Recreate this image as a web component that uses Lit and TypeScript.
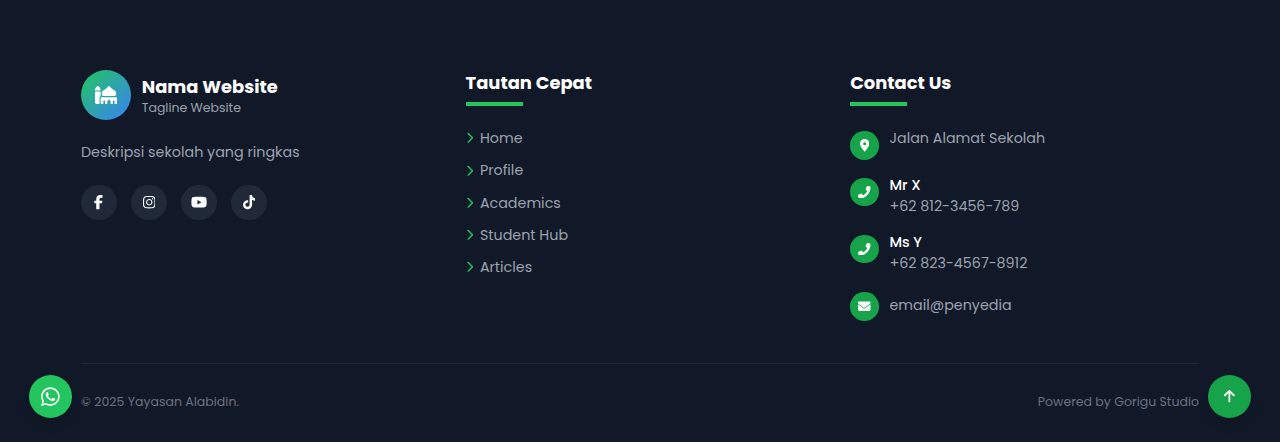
import { LitElement, html, css, svg } from "lit";
import { customElement, property } from "lit/decorators.js";

const ICONS: Record<string, { w: number; d: string }> = {
  mosque: { w: 640, d: "M400 0c5 0 9.8 2.4 12.8 6.4c34.7 46.3 78.1 74.9 133.5 111.5c5.2 3.4 10.5 7 16 10.6c28.9 19.2 45.7 51.7 45.7 86.1c0 28.6-11.3 54.5-29.8 73.4H221.8c-18.4-19-29.8-44.9-29.8-73.4c0-34.4 16.7-66.9 45.7-86.1c5.4-3.6 10.8-7.1 16-10.6C309.1 81.3 352.5 52.7 387.2 6.4c3-4 7.8-6.4 12.8-6.4zM288 512V440c0-13.3-10.7-24-24-24s-24 10.7-24 24v72H192c-17.7 0-32-14.3-32-32V352c0-17.7 14.3-32 32-32H608c17.7 0 32 14.3 32 32V480c0 17.7-14.3 32-32 32H560V440c0-13.3-10.7-24-24-24s-24 10.7-24 24v72H448V454c0-19-8.4-37-23-49.2L400 384l-25 20.8C360.4 417 352 435 352 454v58H288zM70.4 5.2c5.7-4.3 13.5-4.3 19.2 0l16 12C139.8 42.9 160 83.2 160 126v2H0v-2C0 83.2 20.2 42.9 54.4 17.2l16-12zM0 160H160V296.6c-19.1 11.1-32 31.7-32 55.4V480c0 9.6 2.1 18.6 5.8 26.8c-6.6 3.4-14 5.2-21.8 5.2H48c-26.5 0-48-21.5-48-48V176 160z" },
  facebook: { w: 320, d: "M80 299.3V512H196V299.3h86.5l18-97.8H196V166.9c0-51.7 20.3-71.5 72.7-71.5c16.3 0 29.4 .4 37 1.2V7.9C291.4 4 256.4 0 236.2 0C129.3 0 80 50.5 80 159.4v42.1H14v97.8H80z" },
  instagram: { w: 448, d: "M224.1 141c-63.6 0-114.9 51.3-114.9 114.9s51.3 114.9 114.9 114.9S339 319.5 339 255.9 287.7 141 224.1 141zm0 189.6c-41.1 0-74.7-33.5-74.7-74.7s33.5-74.7 74.7-74.7 74.7 33.5 74.7 74.7-33.6 74.7-74.7 74.7zm146.4-194.3c0 14.9-12 26.8-26.8 26.8-14.9 0-26.8-12-26.8-26.8s12-26.8 26.8-26.8 26.8 12 26.8 26.8zm76.1 27.2c-1.7-35.9-9.9-67.7-36.2-93.9-26.2-26.2-58-34.4-93.9-36.2-37-2.1-147.9-2.1-184.9 0-35.8 1.7-67.6 9.9-93.9 36.1s-34.4 58-36.2 93.9c-2.1 37-2.1 147.9 0 184.9 1.7 35.9 9.9 67.7 36.2 93.9s58 34.4 93.9 36.2c37 2.1 147.9 2.1 184.9 0 35.9-1.7 67.7-9.9 93.9-36.2 26.2-26.2 34.4-58 36.2-93.9 2.1-37 2.1-147.8 0-184.8zM398.8 388c-7.8 19.6-22.9 34.7-42.6 42.6-29.5 11.7-99.5 9-132.1 9s-102.7 2.6-132.1-9c-19.6-7.8-34.7-22.9-42.6-42.6-11.7-29.5-9-99.5-9-132.1s-2.6-102.7 9-132.1c7.8-19.6 22.9-34.7 42.6-42.6 29.5-11.7 99.5-9 132.1-9s102.7-2.6 132.1 9c19.6 7.8 34.7 22.9 42.6 42.6 11.7 29.5 9 99.5 9 132.1s2.7 102.7-9 132.1z" },
  youtube: { w: 576, d: "M549.655 124.083c-6.281-23.65-24.787-42.276-48.284-48.597C458.781 64 288 64 288 64S117.22 64 74.629 75.486c-23.497 6.322-42.003 24.947-48.284 48.597-11.412 42.867-11.412 132.305-11.412 132.305s0 89.438 11.412 132.305c6.281 23.65 24.787 41.5 48.284 47.821C117.22 448 288 448 288 448s170.78 0 213.371-11.486c23.497-6.321 42.003-24.171 48.284-47.821 11.412-42.867 11.412-132.305 11.412-132.305s0-89.438-11.412-132.305zm-317.51 213.508V175.185l142.739 81.205-142.739 81.201z" },
  tiktok: { w: 448, d: "M448 209.9a210.1 210.1 0 0 1 -122.8-39.3V349.4A162.6 162.6 0 1 1 185 188.3V278.200a74.6 74.6 0 1 0 52.200 71.200V0l88 0a121.200 121.200 0 0 0 1.900 22.200h0A122.200 122.200 0 0 0 381 102.400a121.400 121.400 0 0 0 67 20.100z" },
  pin: { w: 384, d: "M215.7 499.2C267 435 384 279.400 384 192C384 86 298 0 192 0S0 86 0 192c0 87.400 117 243 168.300 307.200c12.300 15.300 35.100 15.300 47.400 0zM192 128a64 64 0 1 1 0 128 64 64 0 1 1 0-128z" },
  phone: { w: 512, d: "M493.4 24.6l-104-24c-11.300-2.600-22.900 3.300-27.500 13.900l-48 112c-4.200 9.800-1.400 21.300 6.900 28l60.600 49.600c-36 76.700-98.900 140.500-177.200 177.200l-49.600-60.600c-6.800-8.300-18.200-11.100-28-6.900l-112 48C3.900 366.500-2 378.100.600 389.400l24 104C27.100 504.200 36.700 512 48 512c256.100 0 464-207.500 464-464 0-11.200-7.700-20.900-18.600-23.400z" },
  envelope: { w: 512, d: "M48 64C21.500 64 0 85.500 0 112c0 15.100 7.100 29.300 19.200 38.400L236.800 313.600c11.400 8.500 27 8.500 38.400 0L492.800 150.400c12.100-9.100 19.200-23.300 19.200-38.400c0-26.500-21.500-48-48-48H48zM0 176V384c0 35.300 28.700 64 64 64H448c35.300 0 64-28.700 64-64V176L294.400 339.200c-22.800 17.100-54 17.100-76.800 0L0 176z" },
  whatsapp: { w: 448, d: "M380.9 97.100C339 55.100 283.200 32 223.900 32c-122.400 0-222 99.600-222 222 0 39.100 10.200 77.300 29.600 111L0 480l117.700-30.900c32.400 17.700 68.900 27 106.100 27h.1c122.300 0 224.100-99.600 224.100-222 0-59.300-25.200-115-67.100-157zm-157 341.600c-33.200 0-65.700-8.900-94-25.700l-6.700-4-69.800 18.300L72 359.200l-4.400-7c-18.500-29.400-28.200-63.300-28.200-98.200 0-101.700 82.800-184.500 184.600-184.500 49.300 0 95.600 19.200 130.400 54.100 34.800 34.900 56.200 81.200 56.100 130.500 0 101.800-84.900 184.600-186.600 184.600zm101.200-138.200c-5.500-2.800-32.800-16.200-37.900-18-5.100-1.900-8.800-2.800-12.500 2.800-3.700 5.600-14.300 18-17.600 21.800-3.200 3.700-6.500 4.200-12 1.400-32.600-16.300-54-29.100-75.500-66-5.700-9.800 5.700-9.100 16.300-30.300 1.800-3.700.9-6.900-.5-9.700-1.400-2.800-12.500-30.100-17.100-41.200-4.500-10.800-9.100-9.300-12.500-9.500-3.200-.2-6.900-.2-10.600-.2-3.700 0-9.700 1.400-14.800 6.900-5.100 5.600-19.400 19-19.400 46.300 0 27.300 19.900 53.700 22.600 57.400 2.800 3.700 39.100 59.700 94.800 83.800 35.200 15.200 49 16.500 66.600 13.900 10.700-1.600 32.800-13.400 37.400-26.400 4.600-13 4.600-24.100 3.200-26.400-1.300-2.500-5-3.900-10.500-6.600z" },
  up: { w: 384, d: "M214.600 41.400c-12.500-12.500-32.800-12.500-45.300 0l-160 160c-12.500 12.500-12.500 32.800 0 45.300s32.800 12.500 45.300 0L160 141.200V448c0 17.700 14.300 32 32 32s32-14.300 32-32V141.200L329.400 246.600c12.500 12.500 32.800 12.500 45.300 0s12.500-32.800 0-45.300l-160-160z" },
  chevron: { w: 320, d: "M310.600 233.400c12.500 12.500 12.500 32.800 0 45.300l-192 192c-12.500 12.500-32.800 12.500-45.300 0s-12.500-32.800 0-45.300L242.700 256 73.400 86.600c-12.500-12.500-12.500-32.800 0-45.300s32.800-12.500 45.300 0l192 192z" },
};

@customElement("ui-icon")
export class UiIcon extends LitElement {
  @property() name = "";
  static styles = css`
    :host { display: block; height: 1em; flex: none; }
    svg { display: block; height: 1em; width: auto; fill: currentColor; }
  `;
  render() {
    const i = ICONS[this.name];
    return html`<svg viewBox="0 0 ${i.w} 512">${svg`<path d=${i.d}></path>`}</svg>`;
  }
}

const LINKS = ["Home", "Profile", "Academics", "Student Hub", "Articles"];
const SOCIALS = ["facebook", "instagram", "youtube", "tiktok"];

@customElement("app-root")
export class AppRoot extends LitElement {
  static styles = css`
    :host {
      display: block;
      box-sizing: border-box;
      height: 442px;
      overflow: hidden;
      background: #111827;
      color: #9ca3af;
      font: 400 14.3px/21.45px Poppins, Inter, sans-serif;
      padding: 69.6px 81px 0;
    }
    .columns { display: grid; grid-template-columns: repeat(3, 1fr); gap: 35.7px; height: 293px; }
    .brand { display: flex; align-items: center; gap: 10.7px; }
    .logo {
      width: 50px; height: 50px; border-radius: 50%;
      display: grid; place-items: center; color: #fff; font-size: 17.9px;
      background: linear-gradient(to bottom right, #22c55e, #3b82f6);
    }
    .titles { padding-top: 1.6px; }
    .name { color: #fff; font-weight: 700; font-size: 17.9px; line-height: 25px; }
    .tag { font-size: 12.5px; line-height: 17.9px; }
    .about { margin: 22.3px 0 21.3px; }
    .socials { display: flex; gap: 14.3px; }
    .social {
      width: 35.7px; height: 35.7px; border-radius: 50%; background: #1f2937;
      display: grid; place-items: center; color: #fff; font-size: 14.3px;
    }
    h3 { margin: 0 0 21.75px; color: #fff; font-weight: 700; font-size: 17.93px; line-height: 25.2px; }
    h3::after { content: ""; display: block; width: 57.1px; height: 3.6px; margin-top: 7.2px; background: #22c55e; }
    ul { list-style: none; margin: 0; padding: 0.8px 0 0; display: flex; flex-direction: column; gap: 10.8px; }
    .link { display: flex; align-items: center; gap: 7.1px; }
    .link ui-icon { color: #22c55e; font-size: 11.6px; margin-bottom: 1.6px; }
    .contacts { display: flex; flex-direction: column; gap: 14.3px; }
    .contact { display: flex; align-items: flex-start; gap: 10.6px; }
    .dot {
      width: 28.7px; height: 28.7px; margin-top: 3.6px; border-radius: 50%; background: #16a34a;
      display: grid; place-items: center; color: #fff; font-size: 12.5px;
    }
    .detail { position: relative; top: 0.75px; }
    .person { color: #fff; font-weight: 500; }
    .mail { padding-top: 6px; }
    .bottom {
      border-top: 1px solid #1f2937; padding-top: 29.6px;
      display: flex; justify-content: space-between;
      color: #6b7280; font-size: 12.53px; line-height: 18px;
    }
    .fab {
      position: fixed; bottom: 24px; width: 43px; height: 43px; border-radius: 50%;
      display: grid; place-items: center; color: #fff;
      box-shadow: 0 9px 13px -3px rgb(0 0 0 / 0.1), 0 4px 5px -4px rgb(0 0 0 / 0.1);
    }
    .wa { left: 28.8px; background: #22c55e; font-size: 21.4px; }
    .top { right: 28.8px; background: #16a34a; font-size: 14.3px; }
  `;

  contact(icon: string, body: unknown) {
    return html`<div class="contact"><span class="dot"><ui-icon name=${icon}></ui-icon></span><div class="detail">${body}</div></div>`;
  }

  render() {
    return html`
      <div class="columns">
        <section>
          <div class="brand">
            <div class="logo"><ui-icon name="mosque"></ui-icon></div>
            <div class="titles">
              <div class="name">Nama Website</div>
              <div class="tag">Tagline Website</div>
            </div>
          </div>
          <div class="about">Deskripsi sekolah yang ringkas</div>
          <div class="socials">
            ${SOCIALS.map((s) => html`<a class="social"><ui-icon name=${s}></ui-icon></a>`)}
          </div>
        </section>
        <section>
          <h3>Tautan Cepat</h3>
          <ul>
            ${LINKS.map((l) => html`<li class="link"><ui-icon name="chevron"></ui-icon><span>${l}</span></li>`)}
          </ul>
        </section>
        <section>
          <h3>Contact Us</h3>
          <div class="contacts">
            ${this.contact("pin", "Jalan Alamat Sekolah")}
            ${this.contact("phone", html`<div class="person">Mr X</div><div>+62 812-3456-789</div>`)}
            ${this.contact("phone", html`<div class="person">Ms Y</div><div>+62 823-4567-8912</div>`)}
            ${this.contact("envelope", html`<div class="mail">email@penyedia</div>`)}
          </div>
        </section>
      </div>
      <div class="bottom"><span>© 2025 Yayasan Alabidin.</span><span>Powered by Gorigu Studio</span></div>
      <a class="fab wa"><ui-icon name="whatsapp"></ui-icon></a>
      <a class="fab top"><ui-icon name="up"></ui-icon></a>
    `;
  }
}
